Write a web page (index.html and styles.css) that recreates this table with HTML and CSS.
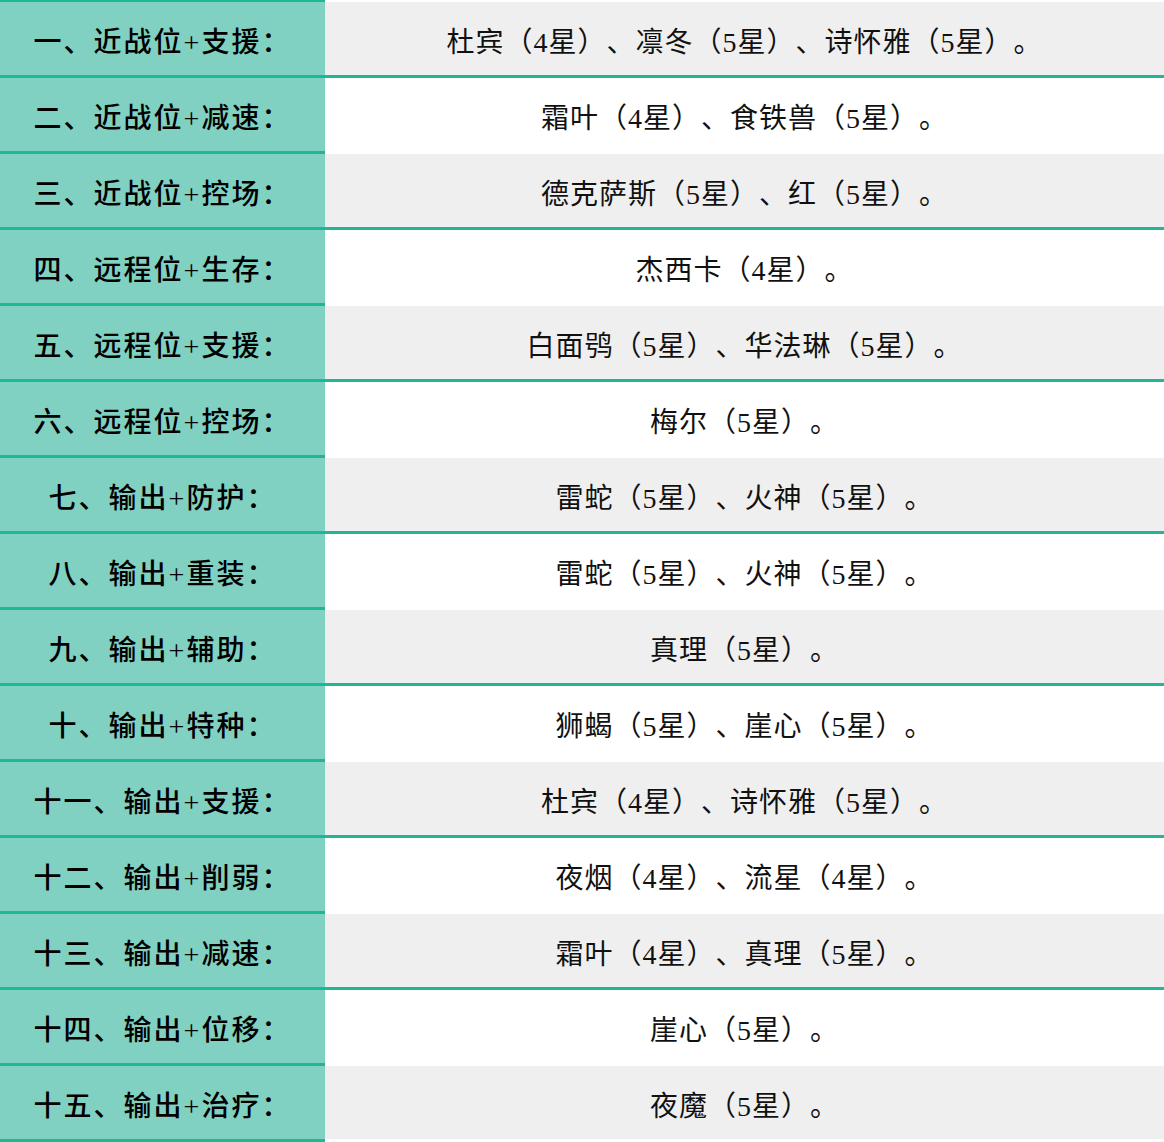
FILE: index.html
```html
<!DOCTYPE html>
<html lang="zh-CN">
<head>
<meta charset="utf-8">
<title>干员推荐</title>
<link rel="stylesheet" href="styles.css">
</head>
<body>
<div class="table">
  <div class="row odd first"><div class="key">一、近战位+支援：</div><div class="val">杜宾（4星）、凛冬（5星）、诗怀雅（5星）。</div></div>
  <div class="row even"><div class="key">二、近战位+减速：</div><div class="val">霜叶（4星）、食铁兽（5星）。</div></div>
  <div class="row odd"><div class="key">三、近战位+控场：</div><div class="val">德克萨斯（5星）、红（5星）。</div></div>
  <div class="row even"><div class="key">四、远程位+生存：</div><div class="val">杰西卡（4星）。</div></div>
  <div class="row odd"><div class="key">五、远程位+支援：</div><div class="val">白面鸮（5星）、华法琳（5星）。</div></div>
  <div class="row even"><div class="key">六、远程位+控场：</div><div class="val">梅尔（5星）。</div></div>
  <div class="row odd"><div class="key">七、输出+防护：</div><div class="val">雷蛇（5星）、火神（5星）。</div></div>
  <div class="row even"><div class="key">八、输出+重装：</div><div class="val">雷蛇（5星）、火神（5星）。</div></div>
  <div class="row odd"><div class="key">九、输出+辅助：</div><div class="val">真理（5星）。</div></div>
  <div class="row even"><div class="key">十、输出+特种：</div><div class="val">狮蝎（5星）、崖心（5星）。</div></div>
  <div class="row odd"><div class="key">十一、输出+支援：</div><div class="val">杜宾（4星）、诗怀雅（5星）。</div></div>
  <div class="row even"><div class="key">十二、输出+削弱：</div><div class="val">夜烟（4星）、流星（4星）。</div></div>
  <div class="row odd"><div class="key">十三、输出+减速：</div><div class="val">霜叶（4星）、真理（5星）。</div></div>
  <div class="row even"><div class="key">十四、输出+位移：</div><div class="val">崖心（5星）。</div></div>
  <div class="row odd last"><div class="key">十五、输出+治疗：</div><div class="val">夜魔（5星）。</div></div>
</div>
</body>
</html>
```
FILE: styles.css
```css
html, body {
  margin: 0;
  padding: 0;
  background: #ffffff;
}
.table {
  width: 1164px;
  font-family: "Liberation Serif", "Noto Sans CJK SC", serif;
  font-size: 28px;
  color: #111111;
  text-spacing-trim: space-all;
  font-kerning: none;
}
.row {
  display: grid;
  grid-template-columns: 325px 1fr;
}
.key, .val {
  display: flex;
  align-items: center;
  justify-content: center;
  padding-top: 2px;
  box-sizing: border-box;
  height: 76px;
  white-space: nowrap;
}
.key {
  background: #80d1c1;
  border-bottom: 3px solid #1fb894;
  font-weight: 500;
  letter-spacing: 2px;
  color: #000000;
}
.val {
  border-bottom: 3px solid #ffffff;
  letter-spacing: 1px;
}
.odd .val {
  background: #efefef;
  border-bottom-color: #1fb894;
}
.last .val {
  border-bottom-color: #ffffff;
}
.first .key {
  border-top: 2px solid #1fb894;
  height: 78px;
}
.first .val {
  border-top: 2px solid #ffffff;
  height: 78px;
}
```
